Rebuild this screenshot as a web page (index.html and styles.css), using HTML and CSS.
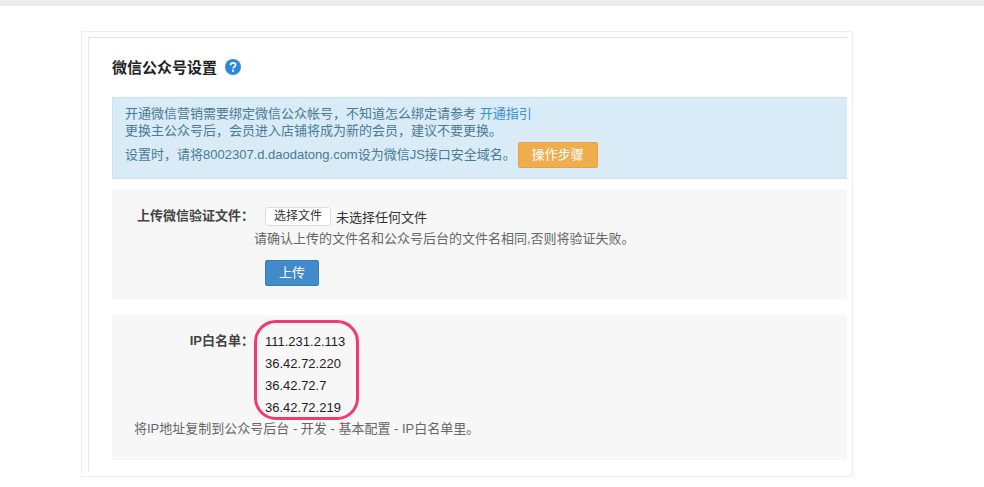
FILE: index.html
```html
<!DOCTYPE html>
<html lang="en">
<head>
    <meta charset="UTF-8">
    <title>微信公众号设置</title>
    <link rel="stylesheet" href="styles.css">
</head>
<body>
    <div class="top-bar"></div>
    <div class="outer-box">
        <div class="inner-box">
            <h2 class="title">
                微信公众号设置
                <svg class="help-icon" viewBox="0 0 16 16" width="16" height="16">
                    <circle cx="8" cy="8" r="8" fill="#2b8ad8"/>
                    <path d="M5.5 6.2 C5.6 4.6 6.7 3.8 8.1 3.8 C9.6 3.8 10.6 4.7 10.6 5.9 C10.6 7.6 8.1 7.8 8.1 9.6" fill="none" stroke="#fff" stroke-width="1.7"/>
                    <rect x="7.1" y="10.7" width="2" height="2" fill="#fff"/>
                </svg>
            </h2>

            <div class="alert">
                <p class="alert-line">开通微信营销需要绑定微信公众帐号，不知道怎么绑定请参考 <a class="link">开通指引</a></p>
                <p class="alert-line">更换主公众号后，会员进入店铺将成为新的会员，建议不要更换。</p>
                <p class="alert-line alert-steps">设置时，请将8002307.d.daodatong.com设为微信JS接口安全域名。<span class="btn-orange">操作步骤</span></p>
            </div>

            <div class="panel panel-upload">
                <div class="field-label">上传微信验证文件：</div>
                <div class="field-body">
                    <div class="file-row"><span class="file-btn">选择文件</span><span class="file-none">未选择任何文件</span></div>
                    <p class="hint">请确认上传的文件名和公众号后台的文件名相同,否则将验证失败。</p>
                    <span class="btn-blue">上传</span>
                </div>
            </div>

            <div class="panel panel-ip">
                <div class="ip-row">
                    <div class="field-label ip-label">IP白名单：</div>
                    <div class="ip-list">
                        <div>111.231.2.113</div>
                        <div>36.42.72.220</div>
                        <div>36.42.72.7</div>
                        <div>36.42.72.219</div>
                        <div class="ring"></div>
                    </div>
                </div>
                <p class="ip-note">将IP地址复制到公众号后台 - 开发 - 基本配置 - IP白名单里。</p>
            </div>
        </div>
    </div>
</body>
</html>
```

FILE: styles.css
```css
body {
    margin: 0;
    height: 487px;
    overflow: hidden;
    background: #fff;
    color: #333;
    font-family: "Liberation Sans", "Noto Sans CJK SC", sans-serif;
    font-size: 13px;
}

.top-bar {
    height: 6px;
    background: #ececec;
}

/* Outer frame and the second frame inside it */
.outer-box {
    box-sizing: border-box;
    width: 772px;
    height: 446px;
    margin: 25px 0 0 81px;
    padding: 5px 5px 5px 6px;
    border: 1px solid #eee;
}

.inner-box {
    box-sizing: border-box;
    height: 434px;
    padding-left: 23px;
    border-top: 1px solid #e4e4e4;
    border-left: 1px solid #e8e8e8;
}

.title {
    display: flex;
    align-items: center;
    gap: 8px;
    height: 59px;
    padding-bottom: 2px;
    box-sizing: border-box;
    margin: 0;
    color: #222;
    font-size: 15px;
    font-weight: bold;
}

.alert {
    box-sizing: border-box;
    height: 82px;
    padding: 7px 12px 0;
    background: #d8ebf6;
    border: 1px solid #c9e4f0;
    border-right: 0;
    color: #4a7a94;
}

.alert-line {
    margin: 0;
    line-height: 17px;
}

.alert-steps {
    display: flex;
    align-items: center;
    margin-top: 3px;
    line-height: 26px;
}

.link {
    color: #3a8fd8;
}

.btn-orange {
    box-sizing: border-box;
    width: 80px;
    height: 26px;
    margin-left: 2px;
    background: #f0ad4e;
    border: 1px solid #eea236;
    border-radius: 2px;
    color: #fff;
    line-height: 24px;
    text-align: center;
}

.panel {
    background: #f7f7f7;
}

.panel-upload {
    display: flex;
    height: 109px;
    margin-top: 11px;
}

.field-label {
    box-sizing: border-box;
    width: 142px;
    color: #444;
    font-weight: bold;
    text-align: right;
}

.panel-upload .field-label {
    padding-top: 17px;
    line-height: 17px;
}

.file-row {
    display: flex;
    align-items: center;
    height: 19px;
    margin: 17px 0 0 11px;
    color: #333;
}

.file-btn {
    box-sizing: border-box;
    width: 66px;
    height: 19px;
    background: #fff;
    border: 1px solid #ddd;
    border-radius: 3px;
    font-size: 12px;
    line-height: 17px;
    text-align: center;
}

.file-none {
    margin-left: 5px;
}

.hint {
    margin: 4px 0 0;
    color: #666;
    line-height: 17px;
}

.btn-blue {
    display: block;
    box-sizing: border-box;
    width: 54px;
    height: 26px;
    margin: 13px 0 0 11px;
    background: #428bca;
    border: 1px solid #357ebd;
    border-radius: 2px;
    color: #fff;
    line-height: 24px;
    text-align: center;
}

.panel-ip {
    height: 145px;
    margin-top: 16px;
}

.ip-row {
    display: flex;
    padding-top: 16px;
}

.ip-label {
    line-height: 20px;
}

.ip-list {
    position: relative;
    margin-left: 11px;
    color: #222;
    font-size: 13px;
    line-height: 22px;
}

/* Red annotation drawn over the IP list */
.ring {
    position: absolute;
    top: -11px;
    left: -11px;
    box-sizing: border-box;
    width: 105px;
    height: 100px;
    border: 3px solid #f23a70;
    border-radius: 22px;
}

.ip-note {
    margin: 1px 0 0 22px;
    color: #666;
    line-height: 17px;
}
```
